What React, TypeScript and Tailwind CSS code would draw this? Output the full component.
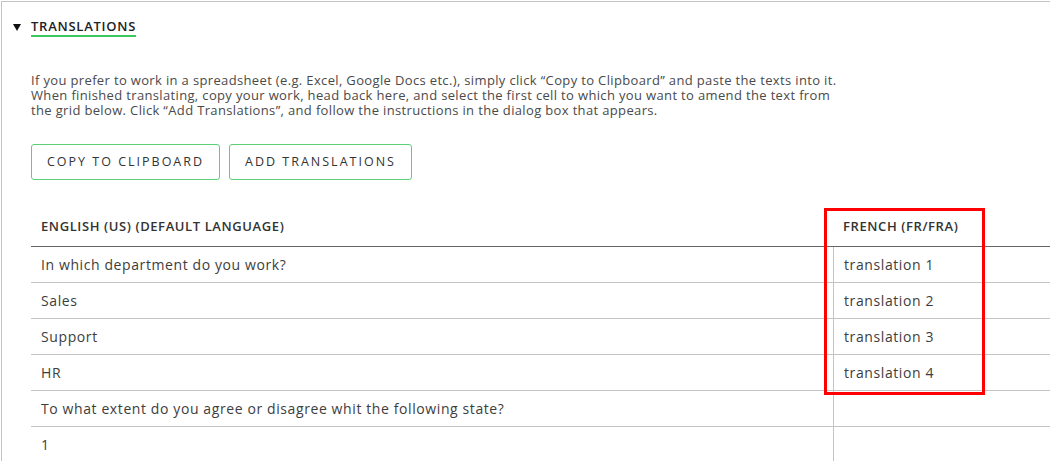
export default function App() {
  const rows = [
    { en: "In which department do you work?", fr: "translation 1" },
    { en: "Sales", fr: "translation 2" },
    { en: "Support", fr: "translation 3" },
    { en: "HR", fr: "translation 4" },
    { en: "To what extent do you agree or disagree whit the following state?", fr: "" },
    { en: "1", fr: "" },
  ];

  return (
    <div className="w-[1050px] h-[461px] overflow-hidden bg-white font-['Open_Sans',_'Liberation_Sans',_sans-serif] text-[#444]">
      <div className="ml-px mt-px w-[1049px] h-[460px] border-t border-l border-[#c4c4c4]">
        {/* section title */}
        <div className="flex items-center h-[37px] pt-[14px] pl-[11px]">
          <svg width="8" height="7" viewBox="0 0 8 7" className="mr-[10px]">
            <polygon points="0,0 8,0 4,7" fill="#111" />
          </svg>
          <span className="text-[13px] font-semibold tracking-[0.75px] text-[#222] leading-[16px] border-b-2 border-[#3fc75f] pb-[1px]">
            TRANSLATIONS
          </span>
        </div>

        <div className="pl-[29px]">
          <p className="mt-[34px] text-[13px] leading-[15px] tracking-[0.35px] text-[#4a4a4a] w-[880px]">
            If you prefer to work in a spreadsheet (e.g. Excel, Google Docs etc.), simply click “Copy to Clipboard” and paste the texts into it.
            <br />
            When finished translating, copy your work, head back here, and select the first cell to which you want to amend the text from
            <br />
            the grid below. Click “Add Translations”, and follow the instructions in the dialog box that appears.
          </p>

          <div className="flex gap-[9px] mt-[26px]">
            <button className="h-[36px] w-[189px] border border-[#5dd077] rounded-[3px] text-[12.5px] tracking-[2px] text-[#333] bg-white">
              COPY TO CLIPBOARD
            </button>
            <button className="h-[36px] w-[183px] border border-[#5dd077] rounded-[3px] text-[12.5px] tracking-[2px] text-[#333] bg-white">
              ADD TRANSLATIONS
            </button>
          </div>

          {/* grid */}
          <div className="relative mt-[27px]">
            <div className="grid grid-cols-[802px_1fr] h-[40px] border-b border-[#666] text-[13px] font-semibold tracking-[0.6px] text-[#333]">
              <div className="flex items-center pl-[10px]">ENGLISH (US) (DEFAULT LANGUAGE)</div>
              <div className="flex items-center pl-[10px]">FRENCH (FR/FRA)</div>
            </div>
            {rows.map((r, i) => (
              <div key={i} className="grid grid-cols-[802px_1fr] h-[36px] border-b border-[#c4c4c4] text-[14px] tracking-[0.6px] text-[#3d3d3d]">
                <div className="flex items-center pl-[10px]">{r.en}</div>
                <div className="flex items-center pl-[10px] border-l border-[#c4c4c4]">{r.fr}</div>
              </div>
            ))}
            <div className="absolute left-[793px] top-[1px] w-[161px] h-[187px] border-[3px] border-[#ff0000]" />
          </div>
        </div>
      </div>
    </div>
  );
}
